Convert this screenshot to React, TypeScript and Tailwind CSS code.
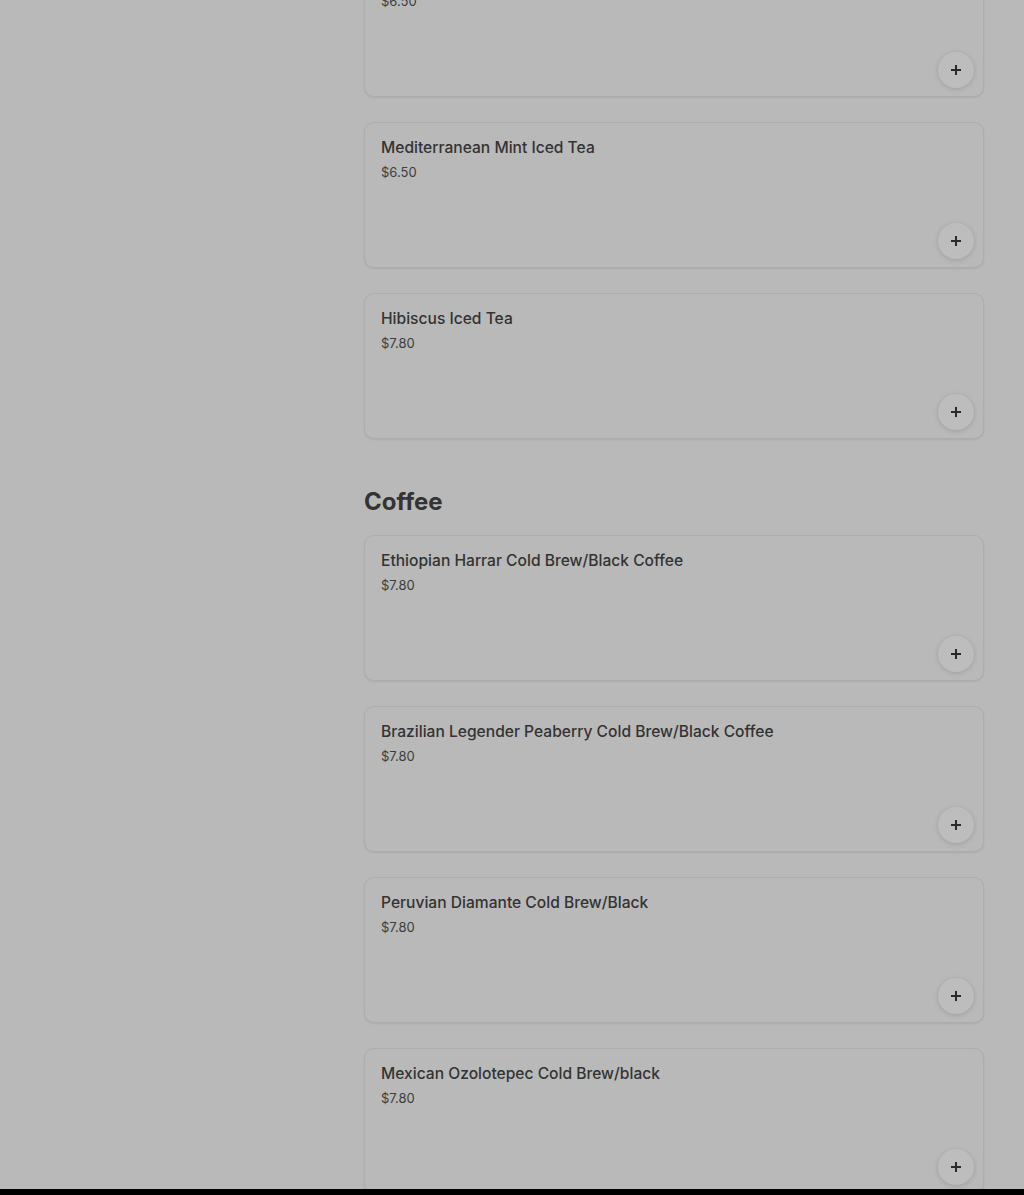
import React from 'react';

type Item = { name: string; price: string };

const TEA: Item[] = [
  { name: 'Peach Iced Tea', price: '$6.50' },
  { name: 'Mediterranean Mint Iced Tea', price: '$6.50' },
  { name: 'Hibiscus Iced Tea', price: '$7.80' },
];

const COFFEE: Item[] = [
  { name: 'Ethiopian Harrar Cold Brew/Black Coffee', price: '$7.80' },
  { name: 'Brazilian Legender Peaberry Cold Brew/Black Coffee', price: '$7.80' },
  { name: 'Peruvian Diamante Cold Brew/Black', price: '$7.80' },
  { name: 'Mexican Ozolotepec Cold Brew/black', price: '$7.80' },
];

const Card: React.FC<{ item: Item }> = ({ item }) => (
  <div className="h-[146px] flex flex-col rounded-[10px] border border-[#adadad] shadow-[0_1px_2px_rgba(0,0,0,0.08)] bg-[#b9b9b9]">
    <div className="pl-4 pt-[13px]">
      <div className="text-[15.6px] leading-6 font-medium text-[#333]">{item.name}</div>
      <div className="text-[13px] leading-5 mt-[2px] text-[#3d3d3d]">{item.price}</div>
    </div>
    <button className="mt-auto self-end mr-[9px] mb-[8px] w-9 h-9 rounded-full bg-[#bdbdbd] shadow-[0_1px_5px_rgba(0,0,0,0.15)] flex items-center justify-center">
      <svg width="12" height="12" viewBox="0 0 12 12">
        <path d="M6 1v10M1 6h10" stroke="#2a2a2a" strokeWidth="2" />
      </svg>
    </button>
  </div>
);

export default function App() {
  return (
    <div className="relative w-full h-[1195px] overflow-hidden bg-[#b9b9b9]" style={{ fontFamily: 'Inter, "Noto Sans", sans-serif' }}>
      <div className="ml-[364px] w-[620px] -mt-[49px] flex flex-col gap-[25px]">
        {TEA.map((it) => (
          <Card key={it.name} item={it} />
        ))}
        <h2 className="mt-[22px] -mb-[8px] text-[24px] leading-8 font-bold text-[#333]">Coffee</h2>
        {COFFEE.map((it) => (
          <Card key={it.name} item={it} />
        ))}
      </div>
      <div className="absolute left-0 right-0 bottom-0 h-[6px] bg-black" />
    </div>
  );
}
